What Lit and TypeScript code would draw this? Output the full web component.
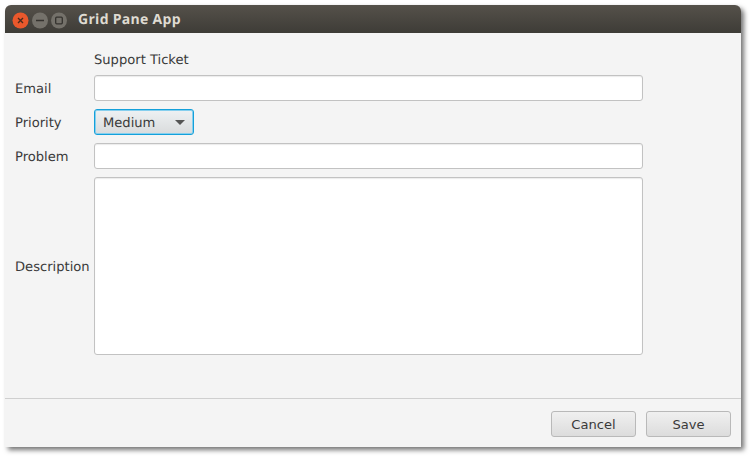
import {css, html, LitElement} from 'lit';
import {customElement} from 'lit/decorators.js';

@customElement('app-root')
export class AppRoot extends LitElement {
  static override styles = css`
    :host {
      display: block;
      width: 750px;
      height: 456px;
      background: #ffffff;
      font-family: "DejaVu Sans", sans-serif;
      font-size: 13.1px;
      color: #3a3a3a;
      text-rendering: geometricPrecision;
      overflow: hidden;
    }
    .page {
      box-sizing: border-box;
      width: 750px;
      height: 456px;
      padding: 5px 9px 9px 5px;
    }
    .window {
      display: flex;
      flex-direction: column;
      height: 442px;
      background: #f4f4f4;
      border-radius: 6px 6px 0 0;
      box-shadow: 3px 3px 5px rgba(0, 0, 0, 0.55);
      overflow: hidden;
    }
    .titlebar {
      display: flex;
      align-items: center;
      flex: none;
      height: 28px;
      padding-left: 7px;
      background: linear-gradient(#55514a, #3e3c37);
    }
    .controls {
      display: flex;
      gap: 3px;
      margin-top: 2px;
    }
    .controls svg {
      display: block;
    }
    .title {
      margin-left: 11px;
      font-family: "Open Sans", sans-serif;
      font-size: 14px;
      font-weight: 700;
      letter-spacing: 0.3px;
      color: #dfdbd2;
    }
    .form {
      flex: 1;
      display: grid;
      grid-template-columns: 79px 549px;
      grid-template-rows: 16px 26px 26px 26px 178px;
      row-gap: 8px;
      align-items: center;
      align-content: start;
      padding: 18px 0 0 10px;
    }
    .heading {
      grid-column: 2;
      padding-top: 2px;
    }
    label {
      padding-top: 2px;
    }
    input,
    textarea {
      box-sizing: border-box;
      display: block;
      width: 100%;
      height: 100%;
      margin: 0;
      background: #ffffff;
      border: 1px solid #c2c2c2;
      border-radius: 3px;
      box-shadow: inset 0 1px 1px #ececec;
      outline: none;
      resize: none;
    }
    .select {
      box-sizing: border-box;
      display: flex;
      align-items: center;
      justify-content: space-between;
      width: 100px;
      height: 26px;
      padding: 2px 8px 0;
      background: linear-gradient(#eef1f3, #d9dbdc);
      border: 1px solid #14a0da;
      border-radius: 3px;
      box-shadow: inset 0 0 0 1px #86cfee;
    }
    .arrow {
      width: 0;
      height: 0;
      margin-top: -2px;
      border-left: 5px solid transparent;
      border-right: 5px solid transparent;
      border-top: 5px solid #555555;
    }
    .footer {
      flex: none;
      display: flex;
      justify-content: flex-end;
      gap: 10px;
      height: 49px;
      padding: 12px 10px 0 0;
      box-sizing: border-box;
      border-top: 1px solid #cfcfcf;
    }
    button {
      box-sizing: border-box;
      width: 85px;
      height: 26px;
      padding: 0;
      font: inherit;
      color: inherit;
      background: linear-gradient(#f0f0f0, #dcdcdc);
      border: 1px solid #b9b9b9;
      border-radius: 3px;
    }
  `;

  override render() {
    return html`
      <div class="page">
        <div class="window">
          <div class="titlebar">
            <div class="controls">
              <svg width="17" height="17" viewBox="0 0 17 17">
                <circle cx="8.5" cy="8.5" r="8" fill="#e9582c" />
                <path d="M6 6l5 5M11 6l-5 5" stroke="#4a2a1c" stroke-width="1.4" />
              </svg>
              <svg width="16" height="17" viewBox="0 0 16 17">
                <circle cx="8" cy="8.5" r="8" fill="#74716a" />
                <path d="M4 8.5h8" stroke="#34322e" stroke-width="1.6" />
              </svg>
              <svg width="16" height="17" viewBox="0 0 16 17">
                <circle cx="8" cy="8.5" r="8" fill="#74716a" />
                <rect x="4.7" y="5.2" width="6.6" height="6.6" rx="1" fill="none" stroke="#34322e" stroke-width="1.3" />
              </svg>
            </div>
            <span class="title">Grid Pane App</span>
          </div>
          <div class="form">
            <span class="heading">Support Ticket</span>
            <label>Email</label>
            <input type="text" />
            <label>Priority</label>
            <div class="select"><span>Medium</span><span class="arrow"></span></div>
            <label>Problem</label>
            <input type="text" />
            <label>Description</label>
            <textarea></textarea>
          </div>
          <div class="footer">
            <button>Cancel</button>
            <button>Save</button>
          </div>
        </div>
      </div>
    `;
  }
}
